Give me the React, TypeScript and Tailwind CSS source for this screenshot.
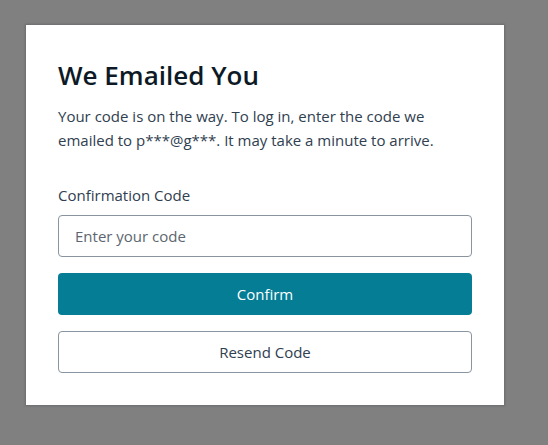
import React from "react";

const App: React.FC = () => {
  return (
    <div
      className="flex h-[445px] w-[548px] items-start bg-[#808080] pl-[26px] pt-[25px]"
      style={{fontFamily: '"Open Sans", "Noto Sans", sans-serif'}}
    >
      <div className="flex w-[478px] flex-col bg-white p-8 shadow-[0_0_2px_1px_rgba(60,70,80,0.35)]">
        <h3 className="text-[26px] font-semibold leading-[36px] text-[#0d1a26]">We Emailed You</h3>
        <p className="mt-[11px] text-[15px] leading-[24px] text-[#304050]">
          Your code is on the way. To log in, enter the code we emailed to p***@g***. It may take a minute to arrive.
        </p>
        <label className="mt-[31px] text-[15px] leading-[24px] text-[#304050]">Confirmation Code</label>
        <input
          className="mt-2 h-[42px] w-full rounded-[4px] border border-[#89949f] px-4 text-[15px] text-[#0d1a26] outline-none placeholder:text-[#5c6670]"
          placeholder="Enter your code"
        />
        <button className="mt-4 h-[42px] w-full rounded-[4px] bg-[#047d95] text-[15px] font-medium text-white">
          Confirm
        </button>
        <button className="mt-4 h-[42px] w-full rounded-[4px] border border-[#89949f] bg-white text-[15px] text-[#304050]">
          Resend Code
        </button>
      </div>
    </div>
  );
};

export default App;
